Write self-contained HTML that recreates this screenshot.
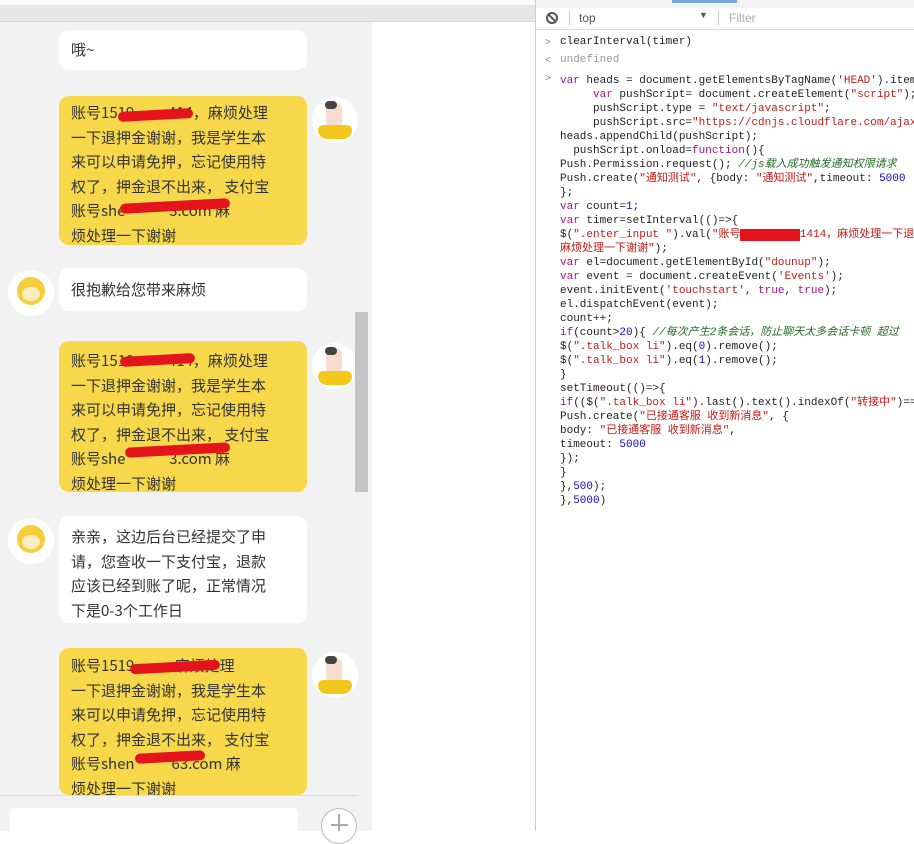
<!DOCTYPE html>
<html><head><meta charset="utf-8"><style>
*{margin:0;padding:0;box-sizing:border-box}
body{width:914px;height:831px;overflow:hidden;background:#fff;position:relative;font-family:"Liberation Sans","Noto Sans CJK SC",sans-serif}
.left{position:absolute;left:0;top:0;width:372px;height:831px;background:#f2f2f2}
.topbar{position:absolute;left:0;top:0;width:535px;height:22px;background:#e6e6e6;border-bottom:1px solid #d8d8d8}
.topbar2{position:absolute;left:0;top:0;width:535px;height:5px;background:#fafafa}
.b{position:absolute;left:59px;width:248px;border-radius:10px;padding:5px 12px;font-size:15px;line-height:24.5px;color:#333;font-family:"Noto Sans CJK SC",sans-serif;white-space:nowrap}
.y{background:#f7d84a}
.w{background:#fff}
.av{position:absolute;width:46px;height:46px;border-radius:50%;background:#fff}
.red{position:absolute;height:10px;background:#e4141c;border-radius:6px;transform:rotate(-3deg)}
.scroll{position:absolute;left:355px;top:312px;width:13px;height:180px;background:#c4c4c4}
.dt{position:absolute;left:535px;top:0;width:379px;height:831px;background:#fff;border-left:1px solid #ccc}
.tb{position:absolute;left:0;top:8px;width:379px;height:22px;border-bottom:1px solid #ddd;font-size:12px;color:#555}
.code{position:absolute;left:24px;top:74px;font-family:"Liberation Mono",monospace;font-size:11px;line-height:14px;color:#222;white-space:pre}
.l0{position:absolute;left:24px;font-family:"Liberation Mono",monospace;font-size:11px;color:#222}
.k{color:#aa0d91}.s{color:#c41a16}.n{color:#1c00cf}.c{color:#236e25;font-style:italic}.g{color:#999}
.pr{position:absolute;left:9px;color:#888;font-family:"Liberation Mono",monospace;font-size:10px}
</style></head><body>
<div class="left"></div>
<div class="topbar"></div><div class="topbar2"></div>
<div style="position:absolute;left:372px;top:22px;width:163px;height:809px;background:#fff"></div>

<div class="b w" style="top:30px;height:40px;padding-top:8px">哦~</div>

<div class="b y" style="top:96px;height:149px">账号1519&nbsp;&nbsp;&nbsp;&nbsp;&nbsp;&nbsp;&nbsp;&nbsp;&nbsp;&nbsp;414，麻烦处理<br>一下退押金谢谢，我是学生本<br>来可以申请免押，忘记使用特<br>权了，押金退不出来， 支付宝<br>账号she&nbsp;&nbsp;&nbsp;&nbsp;&nbsp;&nbsp;&nbsp;&nbsp;&nbsp;&nbsp;&nbsp;&nbsp;&nbsp;3.com 麻<br>烦处理一下谢谢</div>
<div class="red" style="left:118px;top:110px;width:75px"></div>
<div class="red" style="left:120px;top:201px;width:110px"></div>

<div class="b w" style="top:268px;height:43px;padding-top:10px">很抱歉给您带来麻烦</div>

<div class="b y" style="top:341px;height:151px;padding-top:8px">账号1519&nbsp;&nbsp;&nbsp;&nbsp;&nbsp;&nbsp;&nbsp;&nbsp;&nbsp;&nbsp;414，麻烦处理<br>一下退押金谢谢，我是学生本<br>来可以申请免押，忘记使用特<br>权了，押金退不出来， 支付宝<br>账号she&nbsp;&nbsp;&nbsp;&nbsp;&nbsp;&nbsp;&nbsp;&nbsp;&nbsp;&nbsp;&nbsp;&nbsp;&nbsp;3.com 麻<br>烦处理一下谢谢</div>
<div class="red" style="left:120px;top:355px;width:75px"></div>
<div class="red" style="left:125px;top:445px;width:105px"></div>

<div class="b w" style="top:516px;height:107px;padding-top:9px">亲亲，这边后台已经提交了申<br>请，您查收一下支付宝，退款<br>应该已经到账了呢，正常情况<br>下是0-3个工作日</div>

<div class="b y" style="top:648px;height:147px;padding-top:6px">账号1519&nbsp;&nbsp;&nbsp;&nbsp;&nbsp;&nbsp;&nbsp;&nbsp;&nbsp;&nbsp;&nbsp;&nbsp;麻烦处理<br>一下退押金谢谢，我是学生本<br>来可以申请免押，忘记使用特<br>权了，押金退不出来， 支付宝<br>账号shen&nbsp;&nbsp;&nbsp;&nbsp;&nbsp;&nbsp;&nbsp;&nbsp;&nbsp;&nbsp;&nbsp;63.com 麻<br>烦处理一下谢谢</div>
<div class="red" style="left:130px;top:662px;width:90px"></div>
<div class="red" style="left:135px;top:752px;width:70px"></div>

<div class="av" style="left:312px;top:97px"><div style="position:absolute;left:14px;top:6px;width:16px;height:24px;background:#f6ddd0;border-radius:5px"></div><div style="position:absolute;left:13px;top:4px;width:12px;height:8px;background:#444;border-radius:4px"></div><div style="position:absolute;left:6px;top:28px;width:34px;height:14px;background:#f3c81d;border-radius:8px 8px 14px 14px"></div></div>
<div class="av" style="left:312px;top:343px"><div style="position:absolute;left:14px;top:6px;width:16px;height:24px;background:#f6ddd0;border-radius:5px"></div><div style="position:absolute;left:13px;top:4px;width:12px;height:8px;background:#444;border-radius:4px"></div><div style="position:absolute;left:6px;top:28px;width:34px;height:14px;background:#f3c81d;border-radius:8px 8px 14px 14px"></div></div>
<div class="av" style="left:312px;top:652px"><div style="position:absolute;left:14px;top:6px;width:16px;height:24px;background:#f6ddd0;border-radius:5px"></div><div style="position:absolute;left:13px;top:4px;width:12px;height:8px;background:#444;border-radius:4px"></div><div style="position:absolute;left:6px;top:28px;width:34px;height:14px;background:#f3c81d;border-radius:8px 8px 14px 14px"></div></div>
<div class="av" style="left:8px;top:270px"><div style="position:absolute;left:9px;top:7px;width:28px;height:28px;background:#f5cf3a;border-radius:50%"></div><div style="position:absolute;left:14px;top:17px;width:18px;height:14px;background:#fbecc4;border-radius:50%"></div></div>
<div class="av" style="left:8px;top:518px"><div style="position:absolute;left:9px;top:7px;width:28px;height:28px;background:#f5cf3a;border-radius:50%"></div><div style="position:absolute;left:14px;top:17px;width:18px;height:14px;background:#fbecc4;border-radius:50%"></div></div>

<div class="scroll"></div>
<div style="position:absolute;left:0;top:795px;width:358px;height:1px;background:#ddd"></div>
<div style="position:absolute;left:10px;top:808px;width:288px;height:30px;background:#fff;border-radius:4px"></div>
<div style="position:absolute;left:321px;top:808px;width:36px;height:36px;border:1.5px solid #bbb;border-radius:50%;background:#fff"></div>
<div style="position:absolute;left:331px;top:824px;width:17px;height:1.5px;background:#aaa"></div>
<div style="position:absolute;left:338px;top:814px;width:1.5px;height:17px;background:#aaa"></div>

<div class="dt">
<div style="position:absolute;left:0;top:0;width:379px;height:8px;background:#f3f3f3"></div>
<div style="position:absolute;left:136px;top:0;width:65px;height:3px;background:#7aa6e0"></div>
<div class="tb">
<div style="position:absolute;left:10px;top:4px;width:12px;height:12px;border:2px solid #555;border-radius:50%"></div>
<div style="position:absolute;left:11px;top:9px;width:10px;height:2px;background:#555;transform:rotate(45deg)"></div>
<div style="position:absolute;left:33px;top:3px;width:1px;height:14px;background:#ccc"></div>
<span style="position:absolute;left:43px;top:3px">top</span>
<span style="position:absolute;left:163px;top:2px;font-size:9px">▼</span>
<div style="position:absolute;left:182px;top:3px;width:1px;height:14px;background:#ccc"></div>
<span style="position:absolute;left:193px;top:3px;color:#aaa">Filter</span>
</div>
<div class="pr" style="top:38px">&gt;</div>
<div class="pr" style="top:56px">&lt;</div>
<div class="pr" style="top:74px">&gt;</div>
<div class="l0" style="top:36px">clearInterval(timer)</div>
<div class="l0 g" style="top:54px;color:#999">undefined</div>
<div class="code"><span class="k">var</span> heads = document.getElementsByTagName(<span class="s">'HEAD'</span>).item
     <span class="k">var</span> pushScript= document.createElement(<span class="s">"script"</span>);
     pushScript.type = <span class="s">"text/javascript"</span>;
     pushScript.src=<span class="s">"https://cdnjs.cloudflare.com/ajax/</span>
heads.appendChild(pushScript);
  pushScript.onload=<span class="k">function</span>(){
Push.Permission.request(); <span class="c">//js载入成功触发通知权限请求</span>
Push.create(<span class="s">"通知测试"</span>, {body: <span class="s">"通知测试"</span>,timeout: <span class="n">5000</span>
};
<span class="k">var</span> count=<span class="n">1</span>;
<span class="k">var</span> timer=setInterval(()=>{
$(<span class="s">".enter_input "</span>).val(<span class="s">"账号<span style="background:#e4141c;color:#e4141c">1519xxxxx</span>1414，麻烦处理一下退押</span>
<span class="s">麻烦处理一下谢谢"</span>);
<span class="k">var</span> el=document.getElementById(<span class="s">"dounup"</span>);
<span class="k">var</span> event = document.createEvent(<span class="s">'Events'</span>);
event.initEvent(<span class="s">'touchstart'</span>, <span class="k">true</span>, <span class="k">true</span>);
el.dispatchEvent(event);
count++;
<span class="k">if</span>(count><span class="n">20</span>){ <span class="c">//每次产生2条会话，防止聊天太多会话卡顿 超过</span>
$(<span class="s">".talk_box li"</span>).eq(<span class="n">0</span>).remove();
$(<span class="s">".talk_box li"</span>).eq(<span class="n">1</span>).remove();
}
setTimeout(()=>{
<span class="k">if</span>(($(<span class="s">".talk_box li"</span>).last().text().indexOf(<span class="s">"转接中"</span>)==
Push.create(<span class="s">"已接通客服 收到新消息"</span>, {
body: <span class="s">"已接通客服 收到新消息"</span>,
timeout: <span class="n">5000</span>
});
}
},<span class="n">500</span>);
},<span class="n">5000</span>)</div>
</div>
</body></html>
